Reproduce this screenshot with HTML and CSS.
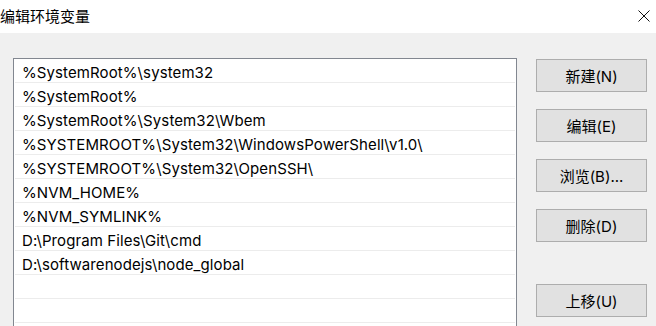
FILE: index.html
```html
<!DOCTYPE html>
<html lang="zh-CN">
<head>
    <meta charset="UTF-8">
    <title>编辑环境变量</title>
    <link rel="stylesheet" href="styles.css">
</head>
<body>
    <!-- 标题栏 -->
    <div class="titlebar">
        <span class="title">编辑环境变量</span>
        <svg class="close-icon" width="12" height="12" viewBox="0 0 12 12">
            <path d="M0.5 0.5 L11.5 11.5 M11.5 0.5 L0.5 11.5" stroke="#111" stroke-width="1" fill="none"/>
        </svg>
    </div>

    <!-- 主体 -->
    <div class="dialog-body">
        <div class="path-list">
            <div class="path-row">%SystemRoot%\system32</div>
            <div class="path-row">%SystemRoot%</div>
            <div class="path-row">%SystemRoot%\System32\Wbem</div>
            <div class="path-row">%SYSTEMROOT%\System32\WindowsPowerShell\v1.0\</div>
            <div class="path-row">%SYSTEMROOT%\System32\OpenSSH\</div>
            <div class="path-row">%NVM_HOME%</div>
            <div class="path-row">%NVM_SYMLINK%</div>
            <div class="path-row">D:\Program Files\Git\cmd</div>
            <div class="path-row">D:\softwarenodejs\node_global</div>
            <div class="path-row"></div>
            <div class="path-row"></div>
            <div class="path-row"></div>
        </div>

        <div class="button-column">
            <button class="dlg-button">新建(N)</button>
            <button class="dlg-button">编辑(E)</button>
            <button class="dlg-button">浏览(B)...</button>
            <button class="dlg-button">删除(D)</button>
            <button class="dlg-button move-up">上移(U)</button>
        </div>
    </div>
</body>
</html>
```

FILE: styles.css
```css
/* 基本样式 */
* {
    margin: 0;
    padding: 0;
    box-sizing: border-box;
}

html, body {
    width: 100%;
    height: 100%;
    overflow: hidden;
}

body {
    display: flex;
    flex-direction: column;
    background-color: #f0f0f0;
    font-family: 'Inter', 'Noto Sans CJK SC', sans-serif;
    font-size: 15px;
    color: #000;
}

/* 标题栏 */
.titlebar {
    height: 33px;
    flex-shrink: 0;
    display: flex;
    align-items: center;
    justify-content: space-between;
    background-color: #fff;
    padding: 0 6px 2px 0;
}

.title {
    font-family: 'Noto Sans CJK SC', sans-serif;
    font-size: 15px;
    color: #000;
}

.close-icon {
    display: block;
}

/* 主体 */
.dialog-body {
    flex: 1;
    display: flex;
    align-items: flex-start;
    padding: 25px 0 0 13px;
}

.path-list {
    width: 504px;
    height: 320px;
    flex-shrink: 0;
    background-color: #fff;
    border: 1px solid #828790;
    padding: 0 1px;
}

.path-row {
    height: 24px;
    padding: 4px 0 0 7px;
    line-height: 19px;
    letter-spacing: 0.1px;
    border-bottom: 1px solid #ececec;
    white-space: nowrap;
}

/* 按钮 */
.button-column {
    display: flex;
    flex-direction: column;
    gap: 17px;
    margin-left: 19px;
    padding-top: 1px;
}

.dlg-button {
    width: 111px;
    height: 33px;
    background-color: #e1e1e1;
    border: 1px solid #adadad;
    font-family: 'Inter', 'Noto Sans CJK SC', sans-serif;
    font-size: 15px;
    color: #000;
}

.move-up {
    margin-top: 25px;
}
```
